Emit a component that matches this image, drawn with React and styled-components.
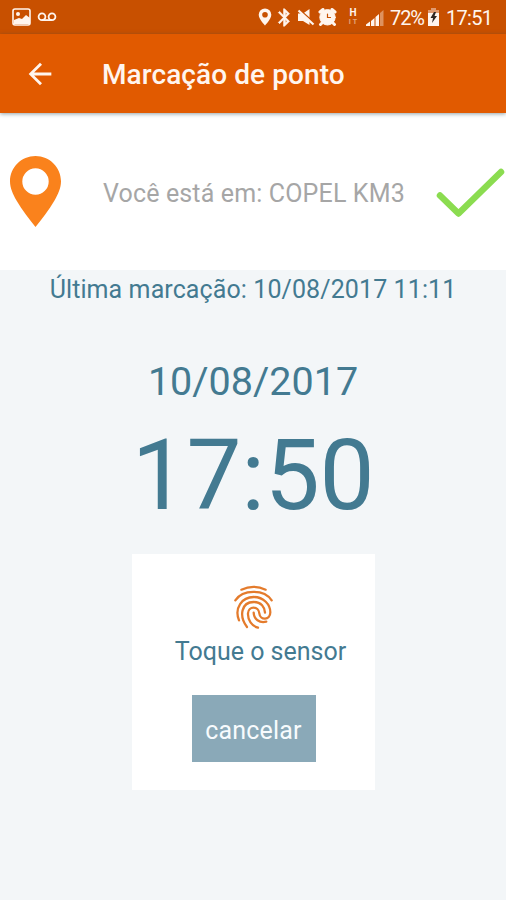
import React from "react";
import styled, { createGlobalStyle } from "styled-components";
import { MdArrowBack, MdBluetooth } from "react-icons/md";

const GlobalStyle = createGlobalStyle`
  * { box-sizing: border-box; }
  body { margin: 0; font-family: Roboto, "Liberation Sans", sans-serif; }
`;

const Screen = styled.div`
  display: flex;
  flex-direction: column;
  height: 900px;
  width: 506px;
  overflow: hidden;
  background: #f3f6f8;
  color: #437a91;
`;

const StatusBar = styled.header`
  display: flex;
  align-items: center;
  flex: none;
  height: 34px;
  padding: 0 14px 0 12px;
  background: #c85000;
  color: #fff5ee;
`;

const StatusIcon = styled.span`
  display: flex;
  flex: none;
  margin-left: ${(p) => p.$gap || 0}px;

  path[fill="none"] {
    stroke: ${(p) => (p.$glyph ? "none" : "inherit")};
  }
`;

const Spacer = styled.span`
  flex: 1;
`;

const StatusText = styled.span`
  flex: none;
  width: ${(p) => p.$width}px;
  margin-left: ${(p) => p.$gap}px;
  padding-top: 1px;
  font-size: 20px;
  line-height: 34px;
  letter-spacing: ${(p) => p.$tracking}px;
  white-space: nowrap;
`;

const Network = styled.span`
  display: flex;
  flex-direction: column;
  align-items: center;
  width: 10px;
  margin-left: 11px;
  font-size: 10px;
  font-weight: 700;
  line-height: 10px;
`;

const NetworkSub = styled.span`
  font-size: 7px;
  line-height: 8px;
  letter-spacing: 2px;
  opacity: 0.5;
  padding-left: 2px;
`;

const AppBar = styled.nav`
  display: flex;
  align-items: center;
  flex: none;
  height: 79px;
  padding: 3px 0 0 23px;
  background: #e15a00;
  color: #fff5ee;
  box-shadow: 0 1px 4px rgba(40, 70, 80, 0.5);
  z-index: 1;
`;

const BackButton = styled.button`
  display: flex;
  padding: 0 0 2px;
  border: 0;
  background: none;
  color: inherit;
  font-size: 34px;
`;

const Title = styled.h1`
  margin: 0 0 0 45px;
  font-size: 28px;
  font-weight: 500;
  line-height: 40px;
  letter-spacing: 0.08px;
  white-space: nowrap;
`;

const LocationRow = styled.section`
  display: flex;
  align-items: center;
  flex: none;
  height: 157px;
  padding: 0 1px 0 10px;
  background: #fff;
`;

const LocationText = styled.span`
  flex: 1;
  margin-left: 42px;
  padding-top: 3px;
  font-size: 25px;
  letter-spacing: 0.15px;
  color: #a6a6a6;
  white-space: nowrap;
`;

const Content = styled.main`
  display: flex;
  flex-direction: column;
  align-items: center;
`;

const Line = styled.p`
  margin: ${(p) => p.$top}px 0 0;
  font-size: ${(p) => p.$size}px;
  line-height: ${(p) => p.$height}px;
  letter-spacing: ${(p) => p.$tracking || 0}px;
  white-space: nowrap;
`;

const SensorCard = styled.section`
  display: flex;
  flex-direction: column;
  align-items: center;
  width: 243px;
  height: 236px;
  margin: 28px 0 0 1px;
  padding-top: 30px;
  background: #fff;
`;

const SensorLabel = styled(Line)`
  padding-left: 14px;
`;

const CancelButton = styled.button`
  width: 124px;
  height: 67px;
  margin-top: 27px;
  padding: 3px 0 0;
  border: 0;
  background: #8aa9b8;
  color: #f7fbfd;
  font-family: inherit;
  font-size: 25px;
  letter-spacing: 0.2px;
`;

export default function App() {
  return (
    <>
      <GlobalStyle />
      <Screen>
        <StatusBar>
          <StatusIcon>
            <svg width="19" height="18" viewBox="0 0 19 18">
              <rect x="1" y="1" width="17" height="16" rx="2" fill="none" stroke="currentColor" strokeWidth="1.6" />
              <path d="M2 12l5-2 3 1 4-4 4 3v6H2z" fill="currentColor" />
              <circle cx="6" cy="6" r="2" fill="currentColor" />
            </svg>
          </StatusIcon>
          <StatusIcon $gap={6}>
            <svg width="20" height="10" viewBox="0 0 20 10" fill="none" stroke="currentColor" strokeWidth="1.8">
              <circle cx="5" cy="4.7" r="3.4" />
              <circle cx="15" cy="4.7" r="3.4" />
              <path d="M5 8.1h10" />
            </svg>
          </StatusIcon>
          <Spacer />
          <StatusIcon>
            <svg width="14" height="18" viewBox="0 0 14 18">
              <path fillRule="evenodd" fill="currentColor" d="M7 .5a6.3 6.3 0 0 0-6.3 6.3C.7 11 7 17.5 7 17.5S13.300 11 13.300 6.800A6.300 6.300 0 0 0 7 .5zM7 4a2.800 2.800 0 1 1 0 5.600A2.800 2.800 0 0 1 7 4z" />
            </svg>
          </StatusIcon>
          <StatusIcon $gap={2} $glyph>
            <MdBluetooth size={21} stroke="currentColor" strokeWidth="0.8" />
          </StatusIcon>
          <StatusIcon $gap={2}>
            <svg width="18" height="18" viewBox="0 0 18 18" fill="currentColor">
              <path d="M1 5.500h5L12.500 1v16L6 13H1z" />
              <path d="M2.500 1.500L17 14.500" stroke="#c85000" strokeWidth="1.500" />
              <path d="M1.500 2.500l15 14" stroke="currentColor" strokeWidth="2.200" />
            </svg>
          </StatusIcon>
          <StatusIcon $gap={3}>
            <svg width="19" height="18" viewBox="0 0 19 18" fill="none" stroke="currentColor" strokeLinecap="round">
              <circle cx="9.500" cy="9.300" r="7.700" fill="currentColor" />
              <path d="M2 4l3-2.500M17 4l-3-2.500M4 15l-1.500 1.500M15 15l1.500 1.500" strokeWidth="3" />
              <path d="M9.500 6v3.500h3" stroke="#c85000" strokeWidth="1.200" />
            </svg>
          </StatusIcon>
          <Network>
            H
            <NetworkSub>IT</NetworkSub>
          </Network>
          <StatusIcon $gap={8}>
            <svg width="19" height="17" viewBox="0 0 19 17" fill="currentColor">
              <path d="M0 17v-1.500l4-3V17zM5 17v-5l3.500-3v8zM9.500 17V8L13 5v12z" />
              <path d="M14 17V4l3.500-3v16z" opacity=".4" />
            </svg>
          </StatusIcon>
          <StatusText $gap={5} $width={35} $tracking={-1.1}>72%</StatusText>
          <StatusIcon $gap={2}>
            <svg width="13" height="18" viewBox="0 0 13 18">
              <path d="M4 0h5v2h3v5H1V2h3z" fill="#e09a70" />
              <path d="M1 5h11v13H1z" fill="currentColor" />
              <path d="M7 4L3.500 10H6l-1 5 5-7H7.500L9 4z" fill="#302722" />
            </svg>
          </StatusIcon>
          <StatusText $gap={6} $width={46} $tracking={-0.7}>17:51</StatusText>
        </StatusBar>
        <AppBar>
          <BackButton aria-label="Voltar"><MdArrowBack /></BackButton>
          <Title>Marcação de ponto</Title>
        </AppBar>
        <LocationRow>
          <svg width="51" height="71" viewBox="0 0 51 71">
            <path fillRule="evenodd" fill="#fa821c" d="M25.500 0C11.400 0 0 11.300 0 25.300 0 32 3 38.500 6.500 44.500 12 54 19 63 25.500 71 32 63 39 54 44.500 44.500 48 38.500 51 32 51 25.300 51 11.300 39.600 0 25.500 0zm0 12.300a13.200 13.200 0 1 1 0 26.400 13.200 13.200 0 0 1 0-26.400z" />
          </svg>
          <LocationText>Você está em: COPEL KM3</LocationText>
          <svg width="69" height="52" viewBox="0 0 69 52">
            <path d="M4 29.500l18.500 18L65 6" fill="none" stroke="#8bdc50" strokeWidth="6.500" strokeLinecap="round" strokeLinejoin="round" />
          </svg>
        </LocationRow>
        <Content>
          <Line $top={4} $size={25} $height={32} $tracking={0.1}>Última marcação: 10/08/2017 11:11</Line>
          <Line $top={51} $size={39.5} $height={50}>10/08/2017</Line>
          <Line $top={19} $size={98} $height={100} $tracking={-0.3}>17:50</Line>
          <SensorCard>
            <svg width="44" height="47" viewBox="0 0 132 141" fill="none" stroke="#e47b2c" strokeWidth="6.800" strokeLinecap="round">
              <path d="M28 17Q65 0 101 17" />
              <path d="M10 49C32 15 97 15 119 49" />
              <path d="M21 109C6 72 30 39 65 39C95 39 115 62 115 85C115 110 84 110 82 88C80 65 49 65 48 88C47 108 59 126 78 131" />
              <path d="M45 129C20 96 28 54 65 54C88 54 98 70 99 86" />
              <path d="M65 86C66 106 82 118 103 113" />
            </svg>
            <SensorLabel $top={5} $size={25} $height={32}>Toque o sensor</SensorLabel>
            <CancelButton>cancelar</CancelButton>
          </SensorCard>
        </Content>
      </Screen>
    </>
  );
}
